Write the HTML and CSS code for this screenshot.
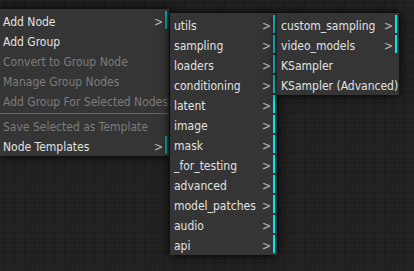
FILE: index.html
```
<!DOCTYPE html>
<html>
<head>
<meta charset="utf-8">
<title>Context menu</title>
<link rel="stylesheet" href="styles.css">
</head>
<body>
<div class="canvas">
	<div class="menu menu-main">
		<div class="entry sub dim-bar">Add Node</div>
		<div class="entry">Add Group</div>
		<div class="entry disabled">Convert to Group Node</div>
		<div class="entry disabled">Manage Group Nodes</div>
		<div class="entry disabled">Add Group For Selected Nodes</div>
		<div class="separator"></div>
		<div class="entry disabled">Save Selected as Template</div>
		<div class="entry sub dim-bar">Node Templates</div>
	</div>
	<div class="menu menu-cats">
		<div class="entry sub">utils</div>
		<div class="entry sub">sampling</div>
		<div class="entry sub">loaders</div>
		<div class="entry sub">conditioning</div>
		<div class="entry sub">latent</div>
		<div class="entry sub">image</div>
		<div class="entry sub">mask</div>
		<div class="entry sub">_for_testing</div>
		<div class="entry sub">advanced</div>
		<div class="entry sub">model_patches</div>
		<div class="entry sub">audio</div>
		<div class="entry sub">api</div>
	</div>
	<div class="menu menu-sampling">
		<div class="entry sub">custom_sampling</div>
		<div class="entry sub">video_models</div>
		<div class="entry">KSampler</div>
		<div class="entry">KSampler (Advanced)</div>
	</div>
</div>
</body>
</html>
```

FILE: styles.css
```
html, body {
	margin: 0px;
	padding: 0px;
}
body {
	width: 414px;
	height: 271px;
	overflow: hidden;
	background-color: #222;
	background-image:
		linear-gradient(to right, rgba(0,0,0,0.14) 1px, transparent 1px),
		linear-gradient(to bottom, rgba(0,0,0,0.14) 1px, transparent 1px);
	background-size: 10px 10px;
	background-position: 4px 2px;
}
.canvas {
	position: relative;
	width: 414px;
	height: 271px;
	font-family: "DejaVu Sans Condensed", "DejaVu Sans", sans-serif;
	font-stretch: condensed;
	font-size: 12px;
}
.menu {
	position: absolute;
	background: #353535;
	box-shadow: 0 0 10px black;
	padding: 0;
	overflow: hidden;
}
.menu-main {
	left: -1px;
	top: 9px;
	width: 170px;
}
.menu-cats {
	left: 170px;
	top: 13px;
	width: 107px;
}
.menu-sampling {
	left: 277px;
	top: 13px;
	width: 122px;
}
.entry {
	position: relative;
	margin: 2px;
	padding: 4px 2px 0 2px;
	line-height: 14px;
	height: 14px;
	color: #e2e2e2;
	white-space: nowrap;
}
.entry.disabled {
	color: #7c7c7c;
}
.entry.sub {
	border-right: 2px solid #00e4ec;
}
.entry.sub.dim-bar {
	border-right-color: #00b0b0;
}
.entry.sub::after {
	content: ">";
	position: absolute;
	top: 4px;
	right: 2px;
	color: #bbb;
}
.separator {
	border-top: 1px solid #333;
	border-bottom: 1px solid #666;
	height: 0px;
	margin: 3px 0 2px 0;
}
```
